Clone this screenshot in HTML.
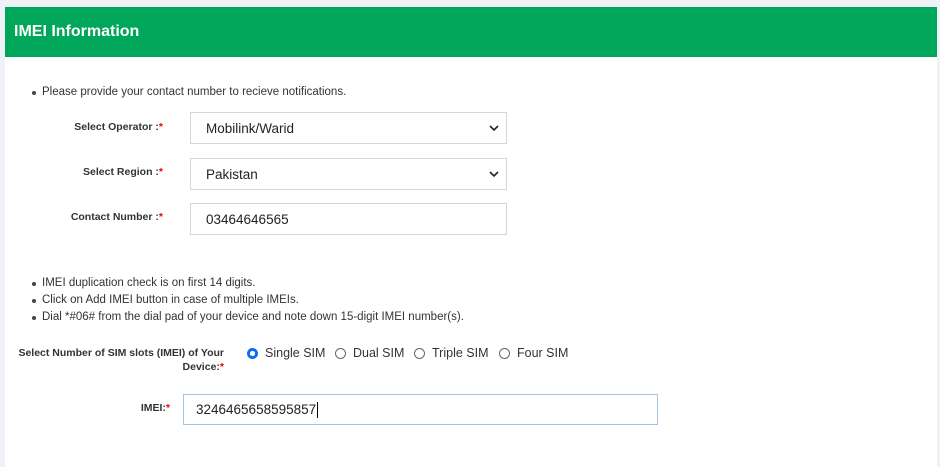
<!DOCTYPE html>
<html><head><style>
body{margin:0;width:940px;height:453px;background:#eef1f5;font-family:"Liberation Sans",sans-serif;overflow:hidden;position:relative}
.card{position:absolute;left:5px;top:7px;width:932px;height:460px;background:#fff}
.hd{position:absolute;left:5px;top:7px;width:932px;height:50px;background:#00a65a;color:#fff;font-weight:bold;font-size:16px;line-height:50px;text-indent:9px}
.t{position:absolute;font-size:11.5px;color:#333;white-space:nowrap}
.b{position:absolute;width:4px;height:4px;border-radius:50%;background:#444}
.l{position:absolute;font-size:10.5px;font-weight:bold;color:#333;text-align:right;white-space:nowrap}
.l i{color:#e00;font-style:normal}
.in{position:absolute;border:1px solid #d6d6d6;box-sizing:border-box;font-size:13.5px;color:#222;padding-left:15px;display:flex;align-items:center}
.chev{position:absolute;right:7px;top:12px}
.r{position:absolute;width:11px;height:11px;border:1px solid #666;border-radius:50%;box-sizing:border-box}
.rt{position:absolute;font-size:12.5px;color:#333}
</style></head><body>
<div class="card"></div>
<div class="hd">IMEI Information</div>
<div class="b" style="left:32px;top:91px"></div><div class="t" style="left:42px;top:86px">Please provide your contact number to recieve notifications.</div>
<div class="l" style="right:777px;top:121px">Select Operator :<i>*</i></div>
<div class="in" style="left:190px;top:112px;width:317px;height:32px">Mobilink/Warid<svg class="chev" width="10" height="7" viewBox="0 0 10 7"><path d="M1 1l4 4 4-4" stroke="#222" stroke-width="1.6" fill="none"/></svg></div>
<div class="l" style="right:777px;top:166px">Select Region :<i>*</i></div>
<div class="in" style="left:190px;top:158px;width:317px;height:32px">Pakistan<svg class="chev" width="10" height="7" viewBox="0 0 10 7"><path d="M1 1l4 4 4-4" stroke="#222" stroke-width="1.6" fill="none"/></svg></div>
<div class="l" style="right:777px;top:211px">Contact Number :<i>*</i></div>
<div class="in" style="left:190px;top:203px;width:317px;height:32px">03464646565</div>
<div class="b" style="left:32px;top:282px"></div><div class="t" style="left:42px;top:277px">IMEI duplication check is on first 14 digits.</div>
<div class="b" style="left:32px;top:299px"></div><div class="t" style="left:42px;top:294px">Click on Add IMEI button in case of multiple IMEIs.</div>
<div class="b" style="left:32px;top:316px"></div><div class="t" style="left:42px;top:311px">Dial *#06# from the dial pad of your device and note down 15-digit IMEI number(s).</div>
<div class="l" style="right:716px;top:346px;line-height:14px">Select Number of SIM slots (IMEI) of Your<br>Device:<i>*</i></div>
<div class="r" style="left:247px;top:348px;border:3px solid #0b6ef0"><div style="width:5px;height:5px;margin:0;background:#fff;border-radius:50%"></div></div>
<div class="rt" style="left:265px;top:346px">Single SIM</div>
<div class="r" style="left:335px;top:348px"></div><div class="rt" style="left:353px;top:346px">Dual SIM</div>
<div class="r" style="left:414px;top:348px"></div><div class="rt" style="left:432px;top:346px">Triple SIM</div>
<div class="r" style="left:499px;top:348px"></div><div class="rt" style="left:517px;top:346px">Four SIM</div>
<div class="l" style="right:770px;top:402px">IMEI:<i>*</i></div>
<div class="in" style="left:183px;top:394px;width:475px;height:31px;border-color:#a8c3e0;padding-left:12px">3246465658595857<span style="display:inline-block;width:1px;height:16px;background:#000;margin-left:1px"></span></div>
</body></html>
